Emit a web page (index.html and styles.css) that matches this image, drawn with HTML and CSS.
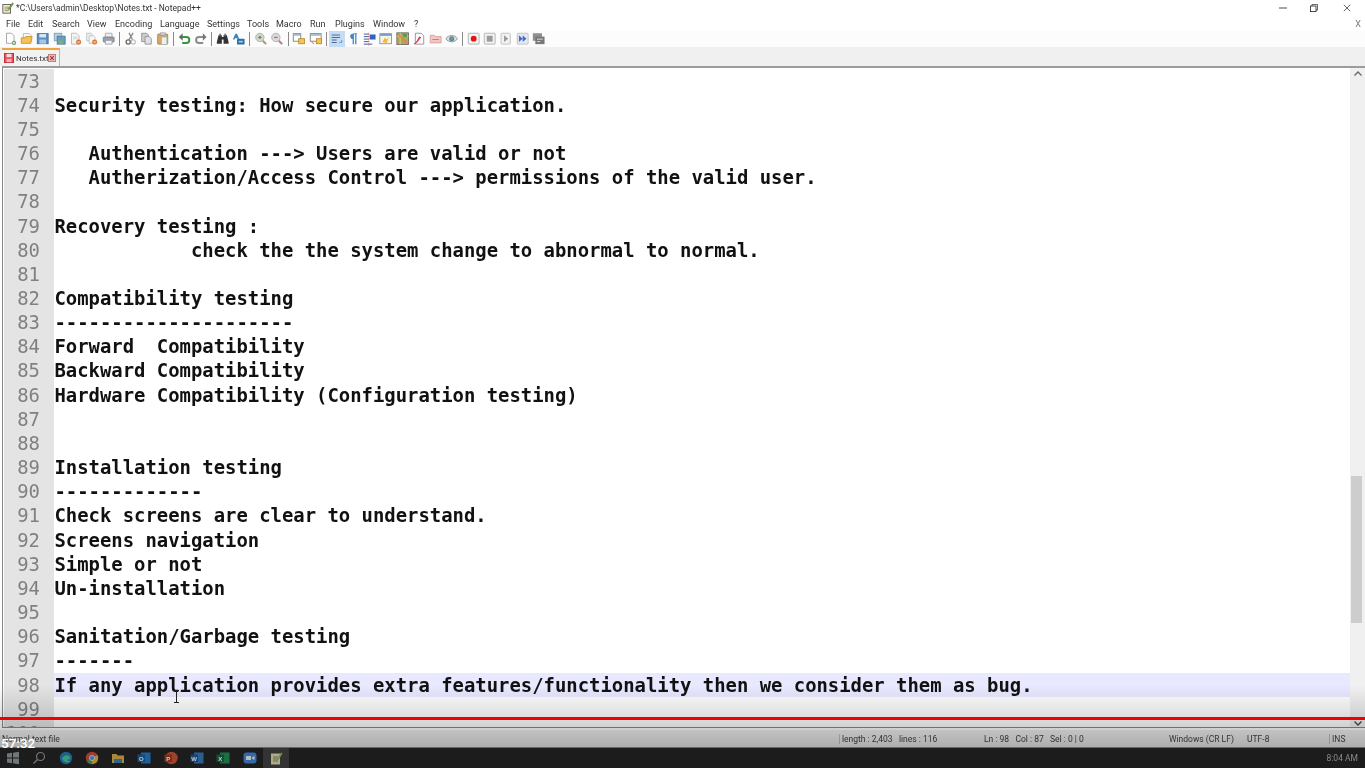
FILE: index.html
```html
<!DOCTYPE html>
<html lang="en">
  <head>
    <meta charset="UTF-8" />
    <title>*C:\Users\admin\Desktop\Notes.txt - Notepad++</title>
    <link rel="stylesheet" href="styles.css">
  </head>
  <body>
    <div class="window">
      <header class="titlebar">
        <svg class="app-icon" viewBox="0 0 14 14"><rect x="1" y="3" width="9" height="10" fill="#f3efc8" stroke="#555"/><path d="M3 6h5M3 8h5M3 10h5" stroke="#8a8a6a"/><path d="M7 8l5-7 1.500 1-5 7z" fill="#7fb04a" stroke="#44662a" stroke-width=".5"/></svg>
        <span class="title-text">*C:\Users\admin\Desktop\Notes.txt - Notepad++</span>
        <div class="window-controls">
          <svg class="win-min" viewBox="0 0 10 10"><path d="M0 5h10" stroke="#222"/></svg>
          <svg class="win-restore" viewBox="0 0 10 10"><path d="M2.500 2.500V.5h7v7h-2" fill="none" stroke="#333"/><rect x=".5" y="2.500" width="7" height="7" fill="none" stroke="#222"/></svg>
          <svg class="win-close" viewBox="0 0 10 10"><path d="M1 1l8 8M9 1l-8 8" stroke="#444"/></svg>
        </div>
      </header>

      <nav class="menubar">
        <span class="m-file">File</span>
        <span class="m-edit">Edit</span>
        <span class="m-search">Search</span>
        <span class="m-view">View</span>
        <span class="m-encoding">Encoding</span>
        <span class="m-language">Language</span>
        <span class="m-settings">Settings</span>
        <span class="m-tools">Tools</span>
        <span class="m-macro">Macro</span>
        <span class="m-run">Run</span>
        <span class="m-plugins">Plugins</span>
        <span class="m-window">Window</span>
        <span class="m-help">?</span>
        <span class="menu-close">X</span>
      </nav>

      <div class="toolbar">
        <svg class="tool" viewBox="0 0 16 16"><path d="M3 1.500h6l3 3v9H3z" fill="#fff" stroke="#9a9a9a"/><circle cx="12" cy="13" r="2.500" fill="#4f9a45"/><path d="M10.500 13h3M12 11.500v3" stroke="#fff"/></svg>
        <svg class="tool" viewBox="0 0 16 16"><path d="M4 2h7l2 2v6H4z" fill="#fff" stroke="#aaa"/><path d="M1.500 7h4l1-1.500h8l-1.500 8h-11.500z" fill="#f3c453" stroke="#c58f25"/></svg>
        <svg class="tool" viewBox="0 0 16 16"><rect x="1.500" y="2" width="13" height="12" fill="#5c8fc4" stroke="#3d6b9e"/><rect x="4" y="2.500" width="8" height="4" fill="#d9e7f3"/><rect x="4" y="9" width="8" height="5" fill="#a9c4dd"/></svg>
        <svg class="tool" viewBox="0 0 16 16"><rect x="1.500" y="1.500" width="9" height="9" fill="#b9cfe0" stroke="#7b9cb8"/><rect x="5" y="5" width="9.500" height="9.500" fill="#6b9cc0" stroke="#4a7a9e"/><rect x="7" y="10" width="5" height="4" fill="#7fb07a"/></svg>
        <svg class="tool" viewBox="0 0 16 16"><path d="M3 1.500h6l3 3v10H3z" fill="#f4f4f4" stroke="#b5b5b5"/><path d="M5 6h5M5 8h5" stroke="#ccc"/><circle cx="11.500" cy="12" r="3" fill="#e0782e"/><path d="M10 12h3" stroke="#fff"/></svg>
        <svg class="tool" viewBox="0 0 16 16"><path d="M2 1.500h5l2 2v7H2z" fill="#f0f0f0" stroke="#bbb"/><path d="M5 4.500h5l2 2v7H5z" fill="#f8f8f8" stroke="#bbb"/><circle cx="11.500" cy="12" r="3" fill="#e0782e"/><path d="M10 12h3" stroke="#fff"/></svg>
        <svg class="tool" viewBox="0 0 16 16"><path d="M4 1.500h8v5H4z" fill="#eee" stroke="#9aa"/><rect x="1.500" y="6" width="13" height="6" rx="1" fill="#9aa3ad" stroke="#77808a"/><path d="M4 10h8v4.500H4z" fill="#f2f2f2" stroke="#99a"/></svg>
        <i class="sep"></i>
        <svg class="tool" viewBox="0 0 16 16"><path d="M11 1L6 9M6 1l4 8" stroke="#8a8a8a" stroke-width="1.600"/><circle cx="5" cy="12" r="2.500" fill="none" stroke="#666" stroke-width="1.500"/><circle cx="11" cy="12" r="2.500" fill="none" stroke="#666" stroke-width="1.500" opacity=".4"/></svg>
        <svg class="tool" viewBox="0 0 16 16"><path d="M2 1.500h6l2 2v8H2z" fill="#ccc" stroke="#8f8f8f"/><path d="M6 5.500h5l2.500 2.500v6.500H6z" fill="#e2e2e2" stroke="#8f8f8f"/></svg>
        <svg class="tool" viewBox="0 0 16 16"><rect x="2" y="2.500" width="12" height="12" rx="1" fill="#d9a868" stroke="#a67c45"/><rect x="5" y="1" width="6" height="3" fill="#ccc" stroke="#888" stroke-width=".6"/><path d="M6.500 6h6.500v9H6.500z" fill="#eef0f4" stroke="#9ba"/></svg>
        <i class="sep"></i>
        <svg class="tool" viewBox="0 0 16 16"><path d="M4 6h6a3.500 3.500 0 0 1 0 7H5" fill="none" stroke="#3c9440" stroke-width="2.400"/><path d="M5.500 1.500v9L1 6z" fill="#5d6f5e"/></svg>
        <svg class="tool" viewBox="0 0 16 16"><path d="M12 6H6a3.500 3.500 0 0 0 0 7h5" fill="none" stroke="#8c8c8c" stroke-width="2.400"/><path d="M10.500 1.500v9L15 6z" fill="#777"/></svg>
        <i class="sep"></i>
        <svg class="tool" viewBox="0 0 16 16"><path d="M3 4h4v2h2V4h4l2 8v2H9V9H7v5H1v-2z" fill="#333"/><path d="M4 2h2v3H4zM10 2h2v3h-2z" fill="#666"/></svg>
        <svg class="tool" viewBox="0 0 16 16"><path d="M1 9l3-7h2l3 7H7L6.500 7.500h-3L3 9z" fill="#3f86b8"/><rect x="6" y="8" width="9" height="7" rx="1" fill="#2a6ea8"/><path d="M8 11.500h5" stroke="#9fd0ee" stroke-width="2"/></svg>
        <i class="sep"></i>
        <svg class="tool" viewBox="0 0 16 16"><circle cx="7" cy="6.500" r="5" fill="#cfd8cc" stroke="#aaa"/><path d="M5 6.500h4M7 4.500v4" stroke="#6b8f4e" stroke-width="1.500"/><path d="M10.500 10.500l4 4" stroke="#b79a55" stroke-width="2.500"/></svg>
        <svg class="tool" viewBox="0 0 16 16"><circle cx="7" cy="6.500" r="5" fill="#d9d9dd" stroke="#aaa"/><path d="M5 6.500h4" stroke="#c06060" stroke-width="1.500"/><path d="M10.500 10.500l4 4" stroke="#c87a7a" stroke-width="2.500"/></svg>
        <i class="sep"></i>
        <svg class="tool" viewBox="0 0 16 16"><rect x="1.500" y="2" width="9" height="9" fill="#fff" stroke="#777"/><rect x="2" y="2.500" width="8" height="2" fill="#9db6d3"/><rect x="8" y="8" width="7" height="6" fill="#f2c45a" stroke="#b9892b"/></svg>
        <svg class="tool" viewBox="0 0 16 16"><rect x="1.500" y="2" width="13" height="9" fill="#fff" stroke="#777"/><rect x="2" y="2.500" width="12" height="2" fill="#9db6d3"/><rect x="9" y="8" width="6" height="6" fill="#f2c45a" stroke="#b9892b"/><path d="M3 12l3 2" stroke="#d2553f"/></svg>
        <i class="sep"></i>
        <span class="tool-on"><svg class="tool" viewBox="0 0 16 16"><path d="M2 3.500h10M2 6.500h10M2 9.500h6M2 12.500h6" stroke="#4a6f95" stroke-width="1.300"/><path d="M14 9.500v3h-3" fill="none" stroke="#4a8fd0"/></svg></span>
        <svg class="tool" viewBox="0 0 16 16"><path d="M10.500 2.500v12M7.500 2.500v12" stroke="#3c84c4" stroke-width="1.500"/><path d="M7.500 2h4.500M7 2.500a2.700 2.700 0 0 0 0 5.500z" fill="#3c84c4" stroke="#3c84c4"/></svg>
        <svg class="tool" viewBox="0 0 16 16"><path d="M1 2.500h6M1 5.500h6M1 8.500h6M1 11.500h6M1 14.500h10" stroke="#25408f"/><rect x="8" y="3" width="7" height="6" fill="#2e62c9"/><path d="M7 1v15" stroke="#e05030" stroke-dasharray="1 1"/></svg>
        <svg class="tool" viewBox="0 0 16 16"><rect x="1" y="2" width="14" height="12" fill="#f8f4e6" stroke="#7d8ea8"/><rect x="1.500" y="2.500" width="13" height="2" fill="#6c8fc7"/><path d="M4 12l3-5 2 2 3-3-3 7z" fill="#efb83a"/></svg>
        <svg class="tool" viewBox="0 0 16 16"><rect x="1" y="1" width="14" height="14" fill="#b5a65d" stroke="#666"/><path d="M5 1v14M1 5h14" stroke="#d8d08a"/><path d="M3 3l10 10" stroke="#d98a3c" stroke-width="2"/><rect x="8" y="2" width="5" height="4" fill="#5f9a55"/></svg>
        <svg class="tool" viewBox="0 0 16 16"><path d="M4 1.500h7l3 3v10H4z" fill="#fff" stroke="#888"/><path d="M2 14c3-1 4-5 7-9l2 1.500c-3 3-4 6-8 8.500z" fill="#cf3f55"/></svg>
        <svg class="tool" viewBox="0 0 16 16"><path d="M1.500 4h5l1 1.500h7V13h-13z" fill="#f3c7c7" stroke="#d39a9a"/><path d="M4 9h8" stroke="#c96a6a"/></svg>
        <svg class="tool" viewBox="0 0 16 16"><path d="M1 8c3-5 11-5 14 0-3 5-11 5-14 0z" fill="#dde3e5" stroke="#8a8a8a"/><circle cx="8" cy="8" r="3" fill="#6c7f89"/><circle cx="8" cy="8" r="1.300" fill="#33c0c0"/></svg>
        <i class="sep"></i>
        <svg class="tool" viewBox="0 0 16 16"><rect x="1.500" y="1.500" width="13" height="13" rx="1" fill="#f2f2f2" stroke="#aaa"/><circle cx="8" cy="8" r="3.500" fill="#dd1515"/></svg>
        <svg class="tool" viewBox="0 0 16 16"><rect x="1.500" y="1.500" width="13" height="13" rx="1" fill="#f2f2f2" stroke="#aaa"/><rect x="4.500" y="4.500" width="7" height="7" fill="#9a9a9a"/></svg>
        <svg class="tool" viewBox="0 0 16 16"><rect x="2.500" y="1.500" width="11" height="13" rx="1" fill="#f2f2f2" stroke="#bbb"/><path d="M6 4l5 4-5 4z" fill="#9a9a9a"/></svg>
        <svg class="tool" viewBox="0 0 16 16"><rect x="1.500" y="1.500" width="13" height="13" rx="1" fill="#e6e9f2" stroke="#bbb"/><path d="M3.500 4l4.500 4-4.500 4zM8 4l4.500 4L8 12z" fill="#3f6fc9"/></svg>
        <svg class="tool" viewBox="0 0 16 16"><rect x="1" y="1.500" width="11" height="9" fill="#8f8f8f"/><rect x="4" y="5.500" width="11" height="9" fill="#777"/><path d="M6 8.500h7M6 11.500h4" stroke="#eee"/></svg>
      </div>

      <div class="tabbar">
        <div class="tab">
          <svg class="tab-save" viewBox="0 0 12 12"><rect x=".5" y=".5" width="11" height="11" fill="#e8505a" stroke="#b23"/><rect x="3" y="1" width="6" height="4" fill="#fbdcdc"/><rect x="3" y="7" width="6" height="4" fill="#f7b3b3"/></svg>
          <span class="tab-name">Notes.txt</span>
          <svg class="tab-close" viewBox="0 0 9 9"><rect x=".5" y=".5" width="8" height="8" fill="#e7bcbc" stroke="#b77"/><path d="M2.500 2.500l4 4M6.500 2.500l-4 4" stroke="#a33" stroke-width="1.200"/></svg>
        </div>
      </div>

      <main class="editor">
        <div class="lines">
          <div class="line"><span class="num">73</span><span class="code"></span></div>
          <div class="line"><span class="num">74</span><span class="code">Security testing: How secure our application.</span></div>
          <div class="line"><span class="num">75</span><span class="code"></span></div>
          <div class="line"><span class="num">76</span><span class="code">   Authentication ---&gt; Users are valid or not</span></div>
          <div class="line"><span class="num">77</span><span class="code">   Autherization/Access Control ---&gt; permissions of the valid user.</span></div>
          <div class="line"><span class="num">78</span><span class="code"></span></div>
          <div class="line"><span class="num">79</span><span class="code">Recovery testing :</span></div>
          <div class="line"><span class="num">80</span><span class="code">            check the the system change to abnormal to normal.</span></div>
          <div class="line"><span class="num">81</span><span class="code"></span></div>
          <div class="line"><span class="num">82</span><span class="code">Compatibility testing</span></div>
          <div class="line"><span class="num">83</span><span class="code">---------------------</span></div>
          <div class="line"><span class="num">84</span><span class="code">Forward  Compatibility</span></div>
          <div class="line"><span class="num">85</span><span class="code">Backward Compatibility</span></div>
          <div class="line"><span class="num">86</span><span class="code">Hardware Compatibility (Configuration testing)</span></div>
          <div class="line"><span class="num">87</span><span class="code"></span></div>
          <div class="line"><span class="num">88</span><span class="code"></span></div>
          <div class="line"><span class="num">89</span><span class="code">Installation testing</span></div>
          <div class="line"><span class="num">90</span><span class="code">-------------</span></div>
          <div class="line"><span class="num">91</span><span class="code">Check screens are clear to understand.</span></div>
          <div class="line"><span class="num">92</span><span class="code">Screens navigation</span></div>
          <div class="line"><span class="num">93</span><span class="code">Simple or not</span></div>
          <div class="line"><span class="num">94</span><span class="code">Un-installation</span></div>
          <div class="line"><span class="num">95</span><span class="code"></span></div>
          <div class="line"><span class="num">96</span><span class="code">Sanitation/Garbage testing</span></div>
          <div class="line"><span class="num">97</span><span class="code">-------</span></div>
          <div class="line current"><span class="num">98</span><span class="code">If any application provides extra features/functionality then we consider them as bug.</span></div>
          <div class="line"><span class="num">99</span><span class="code"></span></div>
          <div class="line"><span class="num">100</span><span class="code"></span></div>
        </div>
        <div class="scrollbar">
          <svg class="arrow" viewBox="0 0 8 5"><path d="M.5 4.500L4 1l3.500 3.500" fill="none" stroke="#666" stroke-width="1.300"/></svg>
          <div class="thumb"></div>
          <svg class="arrow" viewBox="0 0 8 5"><path d="M.5.5L4 4 7.500.5" fill="none" stroke="#444" stroke-width="1.300"/></svg>
        </div>
      </main>

      <footer class="statusbar">
        <span class="st-type">Normal text file</span>
        <span class="st-size">length : 2,403 &nbsp;&nbsp;lines : 116</span>
        <span class="st-pos">Ln : 98 &nbsp;&nbsp;Col : 87 &nbsp;&nbsp;Sel : 0 | 0</span>
        <span class="st-eol">Windows (CR LF)</span>
        <span class="st-enc">UTF-8</span>
        <span class="st-ins">INS</span>
      </footer>

      <div class="taskbar">
        <svg class="task" viewBox="0 0 14 14"><path d="M1 2.500l5-.7v4.700H1zM7 1.700l6-.9v5.700H7zM1 7.500h5v4.700l-5-.7zM7 7.500h6v5.700l-6-.9z" fill="#8e9499"/></svg>
        <svg class="task" viewBox="0 0 14 14"><circle cx="8.500" cy="5.500" r="4" fill="none" stroke="#8e9499" stroke-width="1.200"/><path d="M5.500 8.500L1.500 12.500" stroke="#8e9499" stroke-width="1.300"/></svg>
        <svg class="task" viewBox="0 0 14 14"><circle cx="7" cy="7" r="6.200" fill="#1b78b4"/><path d="M3 8c1-4 6-5 8-2 .7 2-1.500 3-3 2.500 1 2 3 2.500 4.500 1.500A6.200 6.200 0 0 1 3 8z" fill="#45c48e"/></svg>
        <svg class="task" viewBox="0 0 14 14"><circle cx="7" cy="7" r="6.200" fill="#c9443a"/><path d="M7 7L1.700 10.200A6.200 6.200 0 0 0 7 13.200z" fill="#3d9a4f"/><path d="M7 7l5.400-3A6.200 6.200 0 0 1 7 13.200z" fill="#d8b13a"/><circle cx="7" cy="7" r="2.500" fill="#4a8bd0" stroke="#ddd"/></svg>
        <svg class="task" viewBox="0 0 14 14"><path d="M1 3h4.500l1 1.500H13V12H1z" fill="#d9ad45"/><rect x="3" y="8" width="8" height="4" fill="#3b7bb0"/></svg>
        <svg class="task" viewBox="0 0 14 14"><rect x="4" y="1.500" width="9.500" height="11" fill="#1f78c4"/><rect x=".5" y="3.500" width="7.500" height="7.500" fill="#0f5a9c"/><text class="task-letter" x="2" y="9.500">O</text></svg>
        <svg class="task" viewBox="0 0 14 14"><circle cx="7.500" cy="7" r="6.200" fill="#c8502e"/><rect x=".5" y="3.500" width="7.500" height="7.500" fill="#9c3418"/><text class="task-letter" x="2.300" y="9.500">P</text></svg>
        <svg class="task" viewBox="0 0 14 14"><rect x="4" y="1.500" width="9.500" height="11" fill="#2e74b8"/><rect x=".5" y="3.500" width="7.500" height="7.500" fill="#174d90"/><text class="task-letter" x="1.300" y="9.500">W</text></svg>
        <svg class="task" viewBox="0 0 14 14"><rect x="4" y="1.500" width="9.500" height="11" fill="#1f8a50"/><rect x=".5" y="3.500" width="7.500" height="7.500" fill="#10603a"/><text class="task-letter" x="2.200" y="9.500">X</text></svg>
        <svg class="task" viewBox="0 0 14 14"><rect x=".5" y="1.500" width="13" height="11" rx="3" fill="#3b82d8"/><path d="M3 5h5v4H3zM9 6.500l2.500-1.500v4L9 7.500z" fill="#e8f1fb"/></svg>
        <span class="task-on"><svg class="task" viewBox="0 0 14 14"><rect x="2" y="2.500" width="9" height="11" fill="#d9d4a6"/><path d="M4 6h5M4 8h5M4 10h5" stroke="#77735a"/><path d="M8 8l4-6.500 1.500 1-4 6.500z" fill="#86b34e"/></svg></span>
        <span class="clock">8:04 AM</span>
      </div>
    </div>

    <!-- video player overlay on top of the recording -->
    <div class="video-shade"></div>
    <div class="video-progress"></div>
    <span class="video-time">57:32</span>
    <svg class="ibeam" viewBox="0 0 7 13"><path d="M1 .5h5M3.500.5v12M1 12.500h5" fill="none" stroke="#222"/></svg>
  </body>
</html>
```

FILE: styles.css
```css
html, body {
  margin: 0;
  height: 100%;
  overflow: hidden;
}
body {
  font-family: Roboto, "Noto Sans", sans-serif;
  color: #333;
  background-color: #fff;
}
.window {
  height: 768px;
  display: flex;
  flex-direction: column;
}

/* title bar */
.titlebar {
  height: 16px;
  display: flex;
  align-items: center;
  padding-left: 2px;
  background-color: #fff;
  font-size: 8.5px;
  filter: blur(0.3px);
}
.app-icon {
  width: 12px;
  height: 12px;
  margin-right: 2px;
}
.window-controls {
  margin-left: auto;
  display: flex;
  align-items: center;
}
.window-controls svg {
  width: 8px;
  height: 8px;
}
.win-close {
  margin-left: 25px;
  margin-right: 14px;
}
.win-min {
  margin-right: 23px;
}

/* menu */
.menubar {
  height: 15px;
  display: flex;
  align-items: center;
  padding-left: 6px;
  font-size: 9px;
  background-color: #fff;
  filter: blur(0.3px);
}
.m-file { width: 22px; }
.m-edit { width: 24px; }
.m-search { width: 35px; }
.m-view { width: 28px; }
.m-encoding { width: 45px; }
.m-language { width: 47px; }
.m-settings { width: 40px; }
.m-tools { width: 29px; }
.m-macro { width: 34px; }
.m-run { width: 25px; }
.m-plugins { width: 38px; }
.m-window { width: 41px; }
.menu-close {
  margin-left: auto;
  margin-right: 4px;
  color: #777;
}

/* toolbar */
.toolbar {
  height: 16px;
  display: flex;
  align-items: center;
  gap: 3px;
  padding-left: 3.5px;
  background-color: #fcfcfc;
  filter: blur(0.35px);
}
.tool {
  width: 13.4px;
  height: 13.4px;
  display: block;
}
.sep {
  width: 1px;
  height: 14px;
  margin: 0 0.65px;
  background-color: #8a8a8a;
}
.tool-on {
  padding: 1px;
  margin: 0 -1px;
  background-color: #c5dcf3;
}

/* tab bar */
.tabbar {
  height: 19px;
  padding-left: 2px;
  display: flex;
  align-items: flex-end;
  background-color: #f0f0f0;
}
.tab {
  width: 58px;
  height: 18px;
  box-sizing: border-box;
  display: flex;
  align-items: center;
  padding-left: 2px;
  border-top: 2px solid #f0a23c;
  border-right: 1px solid #b8b8b8;
  background-color: #f2f2f2;
  font-size: 8px;
  filter: blur(0.25px);
}
.tab-save {
  width: 10px;
  height: 10px;
  margin-right: 2px;
}
.tab-name {
  width: 32px;
}
.tab-close {
  width: 8px;
  height: 8px;
}

/* editor */
.editor {
  flex: 1;
  min-height: 0;
  display: flex;
  margin: 0 0 2px 2px;
  border-top: 2px solid #9c9c9c;
  border-left: 1px solid #8a8a8a;
  border-bottom: 1px solid #8a8a8a;
  overflow: hidden;
}
.lines {
  flex: 1;
  min-width: 0;
  padding-top: 0.6px;
  filter: blur(0.2px);
}
.line {
  height: 24.17px;
  line-height: 24.17px;
  display: flex;
  margin-left: 1px;
  font-family: "DejaVu Sans Mono", "Liberation Mono", monospace;
  font-size: 18.9px;
}
.num {
  width: 50px;
  box-sizing: border-box;
  padding-right: 14px;
  flex-shrink: 0;
  text-align: right;
  font-weight: normal;
  color: #808080;
  background-color: #e4e4e4;
}
.code {
  flex: 1;
  padding-left: 0.5px;
  white-space: pre;
  font-weight: bold;
  color: #111;
}
.current .code {
  background-color: #e8e8ff;
}
.scrollbar {
  width: 15px;
  flex-shrink: 0;
  position: relative;
  background-color: #f0f0f0;
  display: flex;
  flex-direction: column;
  align-items: center;
  justify-content: space-between;
  padding: 3px 0 1px;
  box-sizing: border-box;
}
.arrow {
  width: 8px;
  height: 5px;
}
.thumb {
  position: absolute;
  top: 408px;
  left: 1px;
  width: 11px;
  height: 147px;
  background-color: #cdcdcd;
}

/* status bar */
.statusbar {
  height: 18px;
  display: flex;
  align-items: center;
  padding-left: 2px;
  font-size: 8.5px;
  color: #444;
  background-color: #f0f0f0;
  border-bottom: 1px solid #8d8d8d;
  box-sizing: border-box;
  filter: blur(0.3px);
}
.st-type { width: 840px; }
.st-size,
.st-ins {
  margin-left: -3px;
  padding-left: 2px;
  border-left: 1px solid #c4c4c4;
}
.st-size { width: 142px; }
.st-pos { width: 185px; }
.st-eol { width: 78px; }
.st-enc { width: 85px; }

/* taskbar */
.taskbar {
  height: 20px;
  display: flex;
  align-items: center;
  padding-left: 6px;
  gap: 12.3px;
  background-color: #1c1c1c;
  filter: blur(0.4px);
}
.task {
  width: 14px;
  height: 14px;
  display: block;
  opacity: 0.75;
}
.task-letter {
  font-family: "Liberation Sans", sans-serif;
  font-size: 6px;
  font-weight: bold;
  fill: #fff;
}
.task-on {
  padding: 3px 6px;
  margin: 0 -6px;
  background-color: #333;
}
.clock {
  margin-left: auto;
  margin-right: 7px;
  font-size: 8.5px;
  color: #8a8a8a;
}

/* overlays from the video player */
.video-shade {
  position: absolute;
  left: 0;
  right: 0;
  top: 685px;
  height: 63px;
  background: linear-gradient(rgba(0, 0, 0, 0), rgba(0, 0, 0, 0.13) 50%, rgba(0, 0, 0, 0.28));
}
.video-progress {
  position: absolute;
  left: 0;
  right: 0;
  top: 717px;
  height: 3px;
  background-color: #f00000;
}
.video-time {
  position: absolute;
  left: 1px;
  top: 735px;
  font-family: Roboto, sans-serif;
  font-size: 13.5px;
  font-weight: 500;
  color: #fff;
}
.ibeam {
  position: absolute;
  left: 173px;
  top: 690px;
  width: 7px;
  height: 13px;
}
```
